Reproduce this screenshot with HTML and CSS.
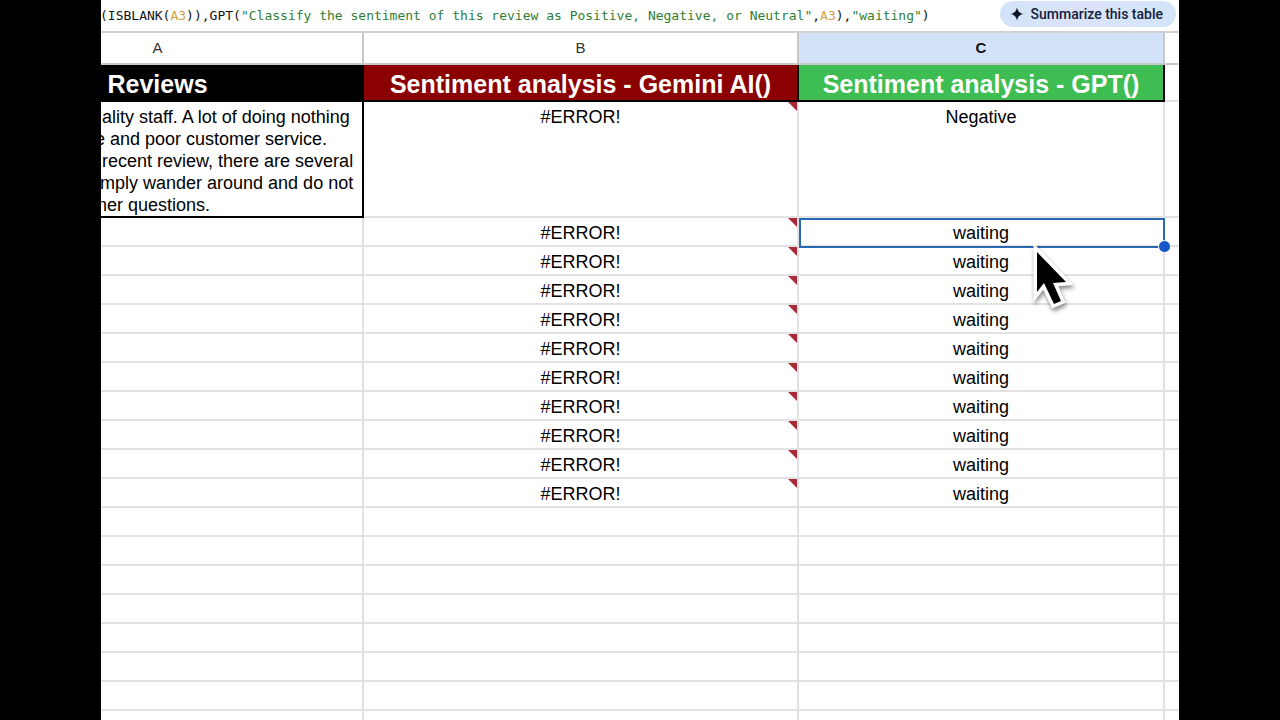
FILE: index.html
```
<!DOCTYPE html>
<html lang="en">
<head>
<meta charset="UTF-8">
<title>Sentiment analysis</title>
<link rel="stylesheet" href="styles.css">
</head>
<body>
	<main class="sheet">
		<div class="formula-bar">
			<code class="formula">(ISBLANK(<span class="ref">A3</span>)),GPT(<span class="str">"Classify the sentiment of this review as Positive, Negative, or Neutral"</span>,<span class="ref">A3</span>),<span class="str">"waiting"</span>)</code>
			<button type="button" class="chip">
				<svg class="spark" viewBox="0 0 14 14" aria-hidden="true"><path d="M7 0.5C7.8 4.4 9.6 6.2 13.5 7C9.6 7.8 7.8 9.6 7 13.5C6.2 9.6 4.4 7.8 0.5 7C4.4 6.2 6.2 4.4 7 0.5Z"/></svg>
				Summarize this table
			</button>
		</div>
		<table class="grid">
			<colgroup>
				<col class="col-a">
				<col class="col-b">
				<col class="col-c">
				<col>
			</colgroup>
			<thead>
				<tr class="letters">
					<th>A</th>
					<th>B</th>
					<th class="active">C</th>
					<th></th>
				</tr>
			</thead>
			<tbody>
				<tr class="titles">
					<th class="black">Reviews</th>
					<th class="red">Sentiment analysis - Gemini AI()</th>
					<th class="green">Sentiment analysis - GPT()</th>
					<td></td>
				</tr>
				<tr class="first">
					<td class="review">    ality staff. A lot of doing nothing
ice and poor customer service.
    recent review, there are several
 simply wander around and do not
omer questions.</td>
					<td class="error">#ERROR!</td>
					<td>Negative</td>
					<td></td>
				</tr>
				<tr>
					<td></td>
					<td class="error">#ERROR!</td>
					<td class="selected">waiting
						<svg class="pointer" viewBox="0 0 48 76" aria-hidden="true"><path d="M7 11V51L14 42L24 63L31 60L23 42L36 41Z"/></svg>
					</td>
					<td></td>
				</tr>
				<tr><td></td><td class="error">#ERROR!</td><td>waiting</td><td></td></tr>
				<tr><td></td><td class="error">#ERROR!</td><td>waiting</td><td></td></tr>
				<tr><td></td><td class="error">#ERROR!</td><td>waiting</td><td></td></tr>
				<tr><td></td><td class="error">#ERROR!</td><td>waiting</td><td></td></tr>
				<tr><td></td><td class="error">#ERROR!</td><td>waiting</td><td></td></tr>
				<tr><td></td><td class="error">#ERROR!</td><td>waiting</td><td></td></tr>
				<tr><td></td><td class="error">#ERROR!</td><td>waiting</td><td></td></tr>
				<tr><td></td><td class="error">#ERROR!</td><td>waiting</td><td></td></tr>
				<tr><td></td><td class="error">#ERROR!</td><td>waiting</td><td></td></tr>
				<tr><td></td><td></td><td></td><td></td></tr>
				<tr><td></td><td></td><td></td><td></td></tr>
				<tr><td></td><td></td><td></td><td></td></tr>
				<tr><td></td><td></td><td></td><td></td></tr>
				<tr><td></td><td></td><td></td><td></td></tr>
				<tr><td></td><td></td><td></td><td></td></tr>
				<tr><td></td><td></td><td></td><td></td></tr>
				<tr><td></td><td></td><td></td><td></td></tr>
			</tbody>
		</table>
	</main>
</body>
</html>
```
FILE: styles.css
```
* {
	box-sizing: border-box;
}
body {
	margin: 0;
	padding: 0 101px;
	background: #000;
	font-family: "Liberation Sans", Arial, sans-serif;
}
.sheet {
	height: 100vh;
	overflow: hidden;
	background: #fff;
}

/* formula bar */
.formula-bar {
	display: flex;
	justify-content: space-between;
	align-items: center;
	height: 33px;
	padding: 0 3px 4px 0;
	border-bottom: 2px solid #d0d0d0;
}
.formula {
	margin-left: -1px;
	padding-top: 4px;
	font: 13px "DejaVu Sans Mono", monospace;
	color: #111;
	white-space: nowrap;
}
.ref {
	color: #d0a040;
}
.str {
	color: #2f7d32;
}
.chip {
	display: flex;
	flex: none;
	align-items: center;
	gap: 7px;
	height: 26px;
	padding: 0 13px 0 10px;
	border: none;
	border-radius: 13px;
	background: linear-gradient(90deg, #d3e3f8, #dbe3fb 50%, #d3e5f9);
	color: #14213a;
	font: 500 14px Roboto, sans-serif;
}
.spark {
	width: 14px;
	height: 14px;
	fill: #0b1526;
}

/* grid, scrolled a little to the right */
.grid {
	width: calc(100% + 148px);
	margin-left: -148px;
	table-layout: fixed;
	border-collapse: separate;
	border-spacing: 0;
	font-size: 18px;
	line-height: 22px;
	color: #000;
}
.col-a {
	width: 411px;
}
.col-b {
	width: 435px;
}
.col-c {
	width: 366px;
}
.grid tr {
	height: 29px;
}
.grid th,
.grid td {
	position: relative;
	padding: 4px 0 0;
	border-right: 2px solid #e2e2e2;
	border-bottom: 2px solid #e2e2e2;
	text-align: center;
	vertical-align: top;
}
.grid .letters {
	height: 32px;
}
.letters th {
	border-color: #c8c8c8;
	font-size: 15px;
	font-weight: normal;
	color: #333;
}
.letters .active {
	background: #d3e2f9;
	font-weight: bold;
	color: #111;
}
.grid .titles {
	height: 37px;
}
.titles th {
	padding-top: 4px;
	border-color: #000;
	font-size: 25px;
	line-height: 30px;
	color: #fff;
}
.black {
	background: #000;
}
.red {
	background: #8b0000;
}
.green {
	background: #3dbd52;
}
.grid .first {
	height: 116px;
}
.grid .review {
	padding-left: 129px;
	border-color: #000;
	text-align: left;
	white-space: pre;
}
.grid tr > :last-child {
	border-right: none;
}
.error::after {
	content: "";
	position: absolute;
	top: 0;
	right: 0;
	border-top: 9px solid #a82a36;
	border-left: 9px solid transparent;
}

/* selected cell with its fill handle */
.grid .selected {
	z-index: 1;
}
.selected::before {
	content: "";
	position: absolute;
	inset: 0 -2px -3px 0;
	border: 2px solid #2a68b2;
}
.selected::after {
	content: "";
	position: absolute;
	right: -8px;
	bottom: -8px;
	width: 11px;
	height: 11px;
	border: 1px solid #fff;
	border-radius: 50%;
	background: #1759c4;
}
.pointer {
	position: absolute;
	top: 23px;
	left: 231px;
	z-index: 1;
	width: 48px;
	height: 76px;
	overflow: visible;
	fill: #000;
	stroke: #fff;
	stroke-width: 7px;
	paint-order: stroke;
	filter: drop-shadow(1px 3px 2px rgba(0, 0, 0, 0.45));
}
```
